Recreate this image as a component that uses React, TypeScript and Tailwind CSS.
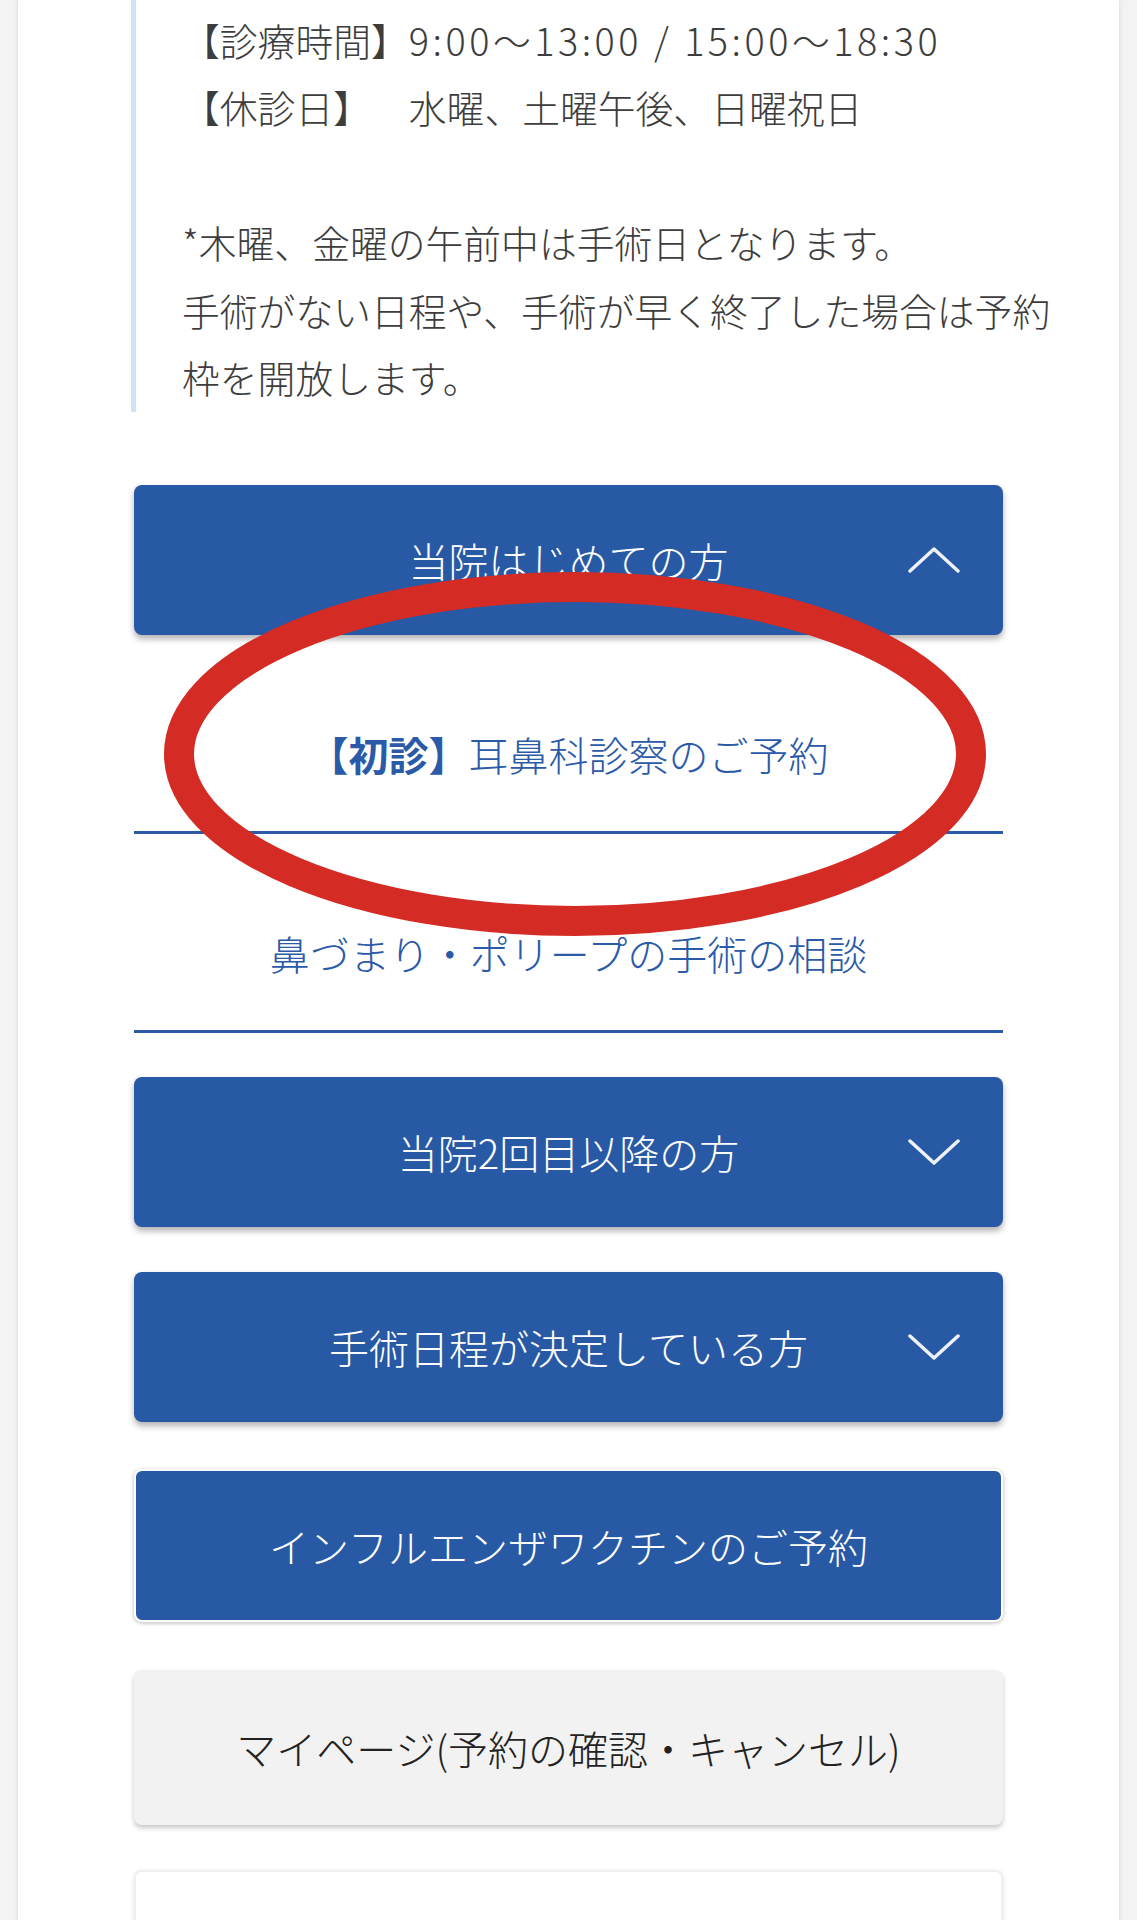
import React from "react";

const FONT = { fontFamily: '"Noto Sans CJK JP", "Noto Sans", sans-serif' };

function Chevron({ up }: { up?: boolean }) {
  return (
    <svg
      className="absolute right-[43px] top-1/2 -translate-y-1/2"
      width="52"
      height="28"
      viewBox="0 0 52 28"
      fill="none"
    >
      <path
        d={up ? "M2 25 L26 3 L50 25" : "M2 3 L26 25 L50 3"}
        stroke="#ffffff"
        strokeWidth="3.5"
        strokeLinecap="round"
        strokeLinejoin="round"
        opacity="0.92"
      />
    </svg>
  );
}

function BlueButton({ label, up, chevron = true }: { label: string; up?: boolean; chevron?: boolean }) {
  return (
    <div className="relative flex h-[150px] items-center justify-center rounded-[8px] bg-[#2759a5] text-[40px] font-light text-white shadow-[0_4px_6px_rgba(0,0,0,0.3)]">
      <span className="leading-none">{label}</span>
      {chevron && <Chevron up={up} />}
    </div>
  );
}

export default function App() {
  return (
    <div className="min-h-[1920px] w-full overflow-hidden bg-[#f3f3f3] [text-spacing-trim:space-all]" style={FONT}>
      <div className="mx-[18px] min-h-[1920px] bg-white shadow-[0_0_5px_rgba(0,0,0,0.12)]">
        <div className="ml-[116px] mr-[116px] flex flex-col">
          {/* info block */}
          <div className="-ml-[3px] border-l-[5px] border-[#cfe3f8] pb-[2px] pl-[46px] pt-[6px] text-[37.8px] font-light leading-[67.4px] text-[#3d3d3d] whitespace-nowrap">
            <div>
              【診療時間】<span className="tracking-[3.5px]">9:00〜13:00 / 15:00〜18:30</span>
            </div>
            <div>【休診日】　水曜、土曜午後、日曜祝日</div>
            <div>&nbsp;</div>
            <div>*木曜、金曜の午前中は手術日となります。</div>
            <div>手術がない日程や、手術が早く終了した場合は予約</div>
            <div>枠を開放します。</div>
          </div>

          {/* accordion 1 */}
          <div className="relative mt-[73px]">
            <BlueButton label="当院はじめての方" up />
            <div className="flex flex-col">
              <div className="flex h-[199px] items-center justify-center border-b-[3px] border-[#2a5aa8] pt-[42px] text-[40px] font-light text-[#2a5aa8]">
                <span className="leading-none">
                  <span className="font-bold">【初診】</span>耳鼻科診察のご予約
                </span>
              </div>
              <div className="flex h-[199px] items-center justify-center border-b-[3px] border-[#2a5aa8] pt-[42px] text-[40px] font-light text-[#2a5aa8]">
                <span className="leading-none">鼻づまり・ポリープの手術の相談</span>
              </div>
            </div>
            {/* red annotation ellipse */}
            <svg
              className="pointer-events-none absolute left-0 top-0 overflow-visible"
              width="869"
              height="560"
              viewBox="0 0 869 560"
              fill="none"
            >
              <ellipse cx="441" cy="269" rx="396" ry="167" stroke="#d42b25" strokeWidth="30" />
            </svg>
          </div>

          <div className="mt-[44px]">
            <BlueButton label="当院2回目以降の方" />
          </div>
          <div className="mt-[45px]">
            <BlueButton label="手術日程が決定している方" />
          </div>
          <div className="mt-[47px]">
            <div className="flex h-[153px] items-center justify-center rounded-[8px] border-2 border-white bg-[#2759a5] text-[40px] font-light text-white shadow-[0_1px_4px_rgba(0,0,0,0.28)]">
              <span className="leading-none">インフルエンザワクチンのご予約</span>
            </div>
          </div>
          <div className="mt-[48px]">
            <div className="flex h-[155px] items-center justify-center rounded-[8px] bg-[#f2f2f2] text-[40px] font-light text-[#222222] shadow-[0_3px_5px_rgba(0,0,0,0.22)]">
              <span className="leading-none">マイページ(予約の確認・キャンセル)</span>
            </div>
          </div>
          <div className="mt-[45px]">
            <div className="h-[155px] rounded-[8px] border-2 border-[#f0f0f0] bg-white shadow-[0_1px_4px_rgba(0,0,0,0.12)]" />
          </div>
        </div>
      </div>
    </div>
  );
}
